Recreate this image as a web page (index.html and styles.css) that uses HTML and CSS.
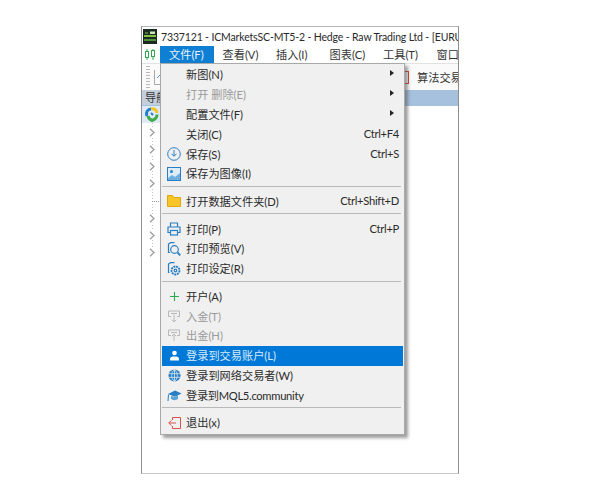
FILE: index.html
```html
<!DOCTYPE html>
<html lang="zh">
<head>
<meta charset="utf-8">
<title>MT5</title>
<link rel="stylesheet" href="styles.css">
</head>
<body>
<div class="window">
  <div class="titlebar">
    <svg class="logo" width="14" height="15" viewBox="0 0 14 15"><rect width="14" height="15" fill="#1c2b22"/><path d="M1 7h12" stroke="#7fc241" stroke-width="2"/><path d="M7 2.500h5v2.500H7z" fill="#cfe8b8"/><path d="M2 4h3" stroke="#7fc241"/><path d="M1 11h12" stroke="#4f8f3a" stroke-width="2"/></svg>
    <span class="title">7337121 - ICMarketsSC-MT5-2 - Hedge - Raw Trading Ltd - [EURUSD,H1]</span>
  </div>
  <div class="menubar">
    <svg class="app" width="12" height="13" viewBox="0 0 12 13"><path d="M3 1v11M9 1v11" stroke="#2fa84f"/><rect x="1.500" y="3.500" width="3" height="6" fill="#fff" stroke="#2fa84f"/><rect x="7.500" y="2.500" width="3" height="6" fill="#fff" stroke="#2fa84f"/></svg>
    <span class="tab active">文件(F)</span>
    <span class="tab">查看(V)</span>
    <span class="tab">插入(I)</span>
    <span class="tab">图表(C)</span>
    <span class="tab">工具(T)</span>
    <span class="tab">窗口(W)</span>
  </div>
  <div class="toolbar">
    <span class="grip"></span>
    <svg class="chart" width="9" height="16" viewBox="0 0 9 16"><path d="M.5 1v14.500H9" fill="none" stroke="#a8a8a8"/><path d="M3 9l4-4" stroke="#5a9ad0"/></svg>
    <span class="algo">
      <svg width="9" height="13" viewBox="0 0 9 13"><rect x=".5" y=".5" width="8" height="12" fill="none" stroke="#e0402f"/></svg>
      算法交易
    </span>
  </div>
  <div class="navhead"><span class="navtitle">导航</span></div>
  <div class="tree">
    <div class="root">
      <svg width="14" height="15" viewBox="0 0 14 15" fill="none" stroke-width="3"><path d="M2 9C.5 5 3 2 6 2" stroke="#1e7fd0"/><path d="M6 2c3-1 6 1 6 4" stroke="#f2c522"/><path d="M3 9c.5 3 3 4 4 4.500 3-1 5-3 5-6" stroke="#3fae4a"/><path d="M6 6l2 2" stroke="#2a7fc4" stroke-width="2"/></svg>
    </div>
    <div class="rows">
      <svg class="chev" viewBox="0 0 6 9"><path d="M1 .8l4 3.700L1 8.200" fill="none" stroke="#9a9a9a" stroke-width="1.200"/></svg>
      <svg class="chev" viewBox="0 0 6 9"><path d="M1 .8l4 3.700L1 8.200" fill="none" stroke="#9a9a9a" stroke-width="1.200"/></svg>
      <svg class="chev" viewBox="0 0 6 9"><path d="M1 .8l4 3.700L1 8.200" fill="none" stroke="#9a9a9a" stroke-width="1.200"/></svg>
      <svg class="chev" viewBox="0 0 6 9"><path d="M1 .8l4 3.700L1 8.200" fill="none" stroke="#9a9a9a" stroke-width="1.200"/></svg>
      <span class="dash"></span>
      <svg class="chev" viewBox="0 0 6 9"><path d="M1 .8l4 3.700L1 8.200" fill="none" stroke="#9a9a9a" stroke-width="1.200"/></svg>
      <svg class="chev" viewBox="0 0 6 9"><path d="M1 .8l4 3.700L1 8.200" fill="none" stroke="#9a9a9a" stroke-width="1.200"/></svg>
      <svg class="chev" viewBox="0 0 6 9"><path d="M1 .8l4 3.700L1 8.200" fill="none" stroke="#9a9a9a" stroke-width="1.200"/></svg>
    </div>
  </div>

  <div class="menu">
    <div class="item"><span class="ic"></span><span class="lb">新图(N)</span><span class="arrow"></span></div>
    <div class="item off"><span class="ic"></span><span class="lb">打开 删除(E)</span><span class="arrow"></span></div>
    <div class="item"><span class="ic"></span><span class="lb">配置文件(F)</span><span class="arrow"></span></div>
    <div class="item"><span class="ic"></span><span class="lb">关闭(C)</span><span class="sc">Ctrl+F4</span></div>
    <div class="item"><span class="ic"><svg width="14" height="14" viewBox="0 0 14 14" fill="none" stroke="#2a7fc4"><circle cx="7" cy="7" r="6.300"/><path d="M7 3v6M4.500 6.800L7 9.300l2.500-2.500"/></svg></span><span class="lb">保存(S)</span><span class="sc">Ctrl+S</span></div>
    <div class="item"><span class="ic"><svg width="14" height="14" viewBox="0 0 14 14"><rect x=".5" y=".5" width="13" height="13" fill="#dcedf9" stroke="#2a7fc4"/><circle cx="4.500" cy="4.500" r="1.500" fill="#2a7fc4"/><path d="M1 11l4-3 3 2 5-4v7H1z" fill="#6db0df"/></svg></span><span class="lb">保存为图像(I)</span></div>
    <div class="sep"></div>
    <div class="item"><span class="ic"><svg width="14" height="12" viewBox="0 0 14 12"><path d="M.5 .5h5l1.500 2h6.500v9H.5z" fill="#f7c626" stroke="#dda90f"/></svg></span><span class="lb">打开数据文件夹(D)</span><span class="sc">Ctrl+Shift+D</span></div>
    <div class="sep"></div>
    <div class="item"><span class="ic"><svg width="14" height="14" viewBox="0 0 14 14" fill="none" stroke="#2a7fc4" stroke-width="1.200"><path d="M3.500 5V1h7v4M3.500 10.500H1V5h12v5.500h-2.500"/><rect x="3.500" y="8.500" width="7" height="4.500"/></svg></span><span class="lb">打印(P)</span><span class="sc">Ctrl+P</span></div>
    <div class="item"><span class="ic"><svg width="14" height="14" viewBox="0 0 14 14" fill="none" stroke="#2a7fc4" stroke-width="1.200"><path d="M3 10.500H1.500V2l2-1.300h4"/><circle cx="7.500" cy="7.500" r="3.800"/><path d="M10.500 10.500L13.300 13.300" stroke-width="1.800"/></svg></span><span class="lb">打印预览(V)</span></div>
    <div class="item"><span class="ic"><svg width="14" height="14" viewBox="0 0 14 14" fill="none" stroke="#2a7fc4" stroke-width="1.200"><path d="M2.500 10.500H1.500V2l2-1.300h4"/><circle cx="8.500" cy="8.500" r="4" stroke-dasharray="2 .7" stroke-width="1.800"/><circle cx="8.500" cy="8.500" r="1.300"/></svg></span><span class="lb">打印设定(R)</span></div>
    <div class="sep"></div>
    <div class="item"><span class="ic"><svg width="11" height="11" viewBox="0 0 11 11"><path d="M5.500 1v9M1 5.500h9" stroke="#2fa84f" stroke-width="1.100"/></svg></span><span class="lb">开户(A)</span></div>
    <div class="item off"><span class="ic"><svg width="12" height="13" viewBox="0 0 12 13" fill="none" stroke="#b8b8b8"><path d="M3 6.500H.5V1h11v5.500H9M3 3.500h6M6 4.500V12M3.800 9.800L6 12l2.200-2.200"/></svg></span><span class="lb">入金(T)</span></div>
    <div class="item off"><span class="ic"><svg width="12" height="13" viewBox="0 0 12 13" fill="none" stroke="#b8b8b8"><path d="M3 6.500H.5V1h11v5.500H9M3 3.500h6M6 12V5M3.800 7.200L6 5l2.200 2.200"/></svg></span><span class="lb">出金(H)</span></div>
    <div class="item on"><span class="ic"><svg width="9" height="11" viewBox="0 0 10 12" fill="#fff"><circle cx="5" cy="3.200" r="2.600"/><path d="M0 11.500V9.500C0 7.500 2 7 5 7s5 .5 5 2.500v2z"/></svg></span><span class="lb">登录到交易账户(L)</span></div>
    <div class="item"><span class="ic"><svg width="13" height="13" viewBox="0 0 14 14"><circle cx="7" cy="7" r="6.500" fill="#2a7fc4"/><path d="M1 5h12M1 9h12M7 .5v13M7 .5C3 4 3 10 7 13.500M7 .5c4 3.500 4 9.500 0 13" fill="none" stroke="#e6f1fa" stroke-width=".8"/></svg></span><span class="lb">登录到网络交易者(W)</span></div>
    <div class="item"><span class="ic"><svg width="15" height="13" viewBox="0 0 15 13"><path d="M1 5l7-3.500L14.500 4.500 8 7.800z" fill="#2a7fc4"/><path d="M4 7v3c2 1.500 5 1.500 7 0V6.500L8 8z" fill="#5aa5d8"/><path d="M1.500 5.500L1 12" stroke="#2a7fc4" fill="none"/></svg></span><span class="lb tight">登录到MQL5.community</span></div>
    <div class="sep"></div>
    <div class="item"><span class="ic"><svg width="13" height="14" viewBox="0 0 13 14" fill="none" stroke="#d9534a"><path d="M4.500 4V1.500h8v11h-8V10M8 7H.8M3.500 4.300L.8 7l2.700 2.700"/></svg></span><span class="lb">退出(x)</span></div>
  </div>
</div>
</body>
</html>
```
FILE: styles.css
```css
* { box-sizing: border-box; }
html, body { margin: 0; height: 100%; background: #fff; }
body {
  padding: 26px 0 0 141px;
  font-family: Lato, "Noto Sans CJK SC", sans-serif;
  font-size: 11.200px;
  color: #333;
  overflow: hidden;
}
.window {
  position: relative;
  width: 318px;
  height: 448px;
  border: 1px solid #8e8e8e;
  border-top-color: #b5b5b5;
  border-bottom-color: #c8c8c8;
  background: #fff;
  overflow: hidden;
  display: flex;
  flex-direction: column;
}
.titlebar {
  height: 19px;
  flex: none;
  display: flex;
  align-items: center;
  gap: 4px;
  padding-left: 1px;
  white-space: nowrap;
  color: #2a2a2a;
  font-size: 10.500px;
  letter-spacing: -.15px;
}
.logo { flex: none; }
.title { flex: none; }
.menubar {
  height: 18px;
  flex: none;
  display: flex;
  align-items: stretch;
  white-space: nowrap;
  border-bottom: 1px solid #e2e2e2;
}
.app { flex: none; align-self: center; margin: 0 4px 0 2px; }
.tab { flex: none; line-height: 17px; padding-left: 9px; width: 53.500px; }
.tab.active { background: #0f7fd4; color: #e8f3fb; }
.toolbar {
  height: 26px;
  flex: none;
  display: flex;
  align-items: center;
  padding-left: 4px;
  white-space: nowrap;
  background: #fafafa;
}
.grip { width: 4px; height: 22px; flex: none; background: repeating-linear-gradient(#b8b8b8 0 1px, transparent 1px 3px); margin-right: 4px; }
.chart { flex: none; }
.algo { display: flex; align-items: center; gap: 8px; margin-left: 237px; }
.navhead {
  height: 16px;
  flex: none;
  background: #a6c1de;
  line-height: 15px;
}
.navtitle { display: block; width: 19px; padding-left: 3px; background: #c3cfdc; white-space: nowrap; overflow: hidden; }
.tree { flex: 1; }
.root { width: 19px; height: 17px; background: #dfeaf6; padding: 1px 0 0 3px; }
.root svg { display: block; }
.rows {
  display: flex;
  flex-direction: column;
  gap: 8.170px;
  margin-left: 7px;
  padding-top: 5px;
  align-items: flex-start;
  background: repeating-linear-gradient(#c4c4c4 0 1px, transparent 1px 3px) 3px 0 / 1px 100% no-repeat;
  height: 134px;
}
.chev { width: 6px; height: 9px; flex: none; background: #fff; }
.dash { width: 9px; height: 9px; flex: none; border-bottom: 1px dotted #999; margin-left: 3px; transform: translateY(-4px); }
.menu {
  position: absolute;
  left: 18px;
  top: 36px;
  width: 245px;
  background: #f0f0f0;
  border: 1px solid #a9a9a9;
  padding: 1px;
  box-shadow: 3px 3px 3px rgba(80, 80, 80, .55);
  color: #2b2b2b;
}
.item {
  height: 19.800px;
  display: flex;
  align-items: center;
  padding-right: 4px;
  white-space: nowrap;
}
.item.off { color: #9a9a9a; }
.item.on { background: #0078d7; color: #d8ebfa; }
.ic { width: 24px; flex: none; display: flex; justify-content: center; align-items: center; }
.lb { flex: 1; padding-bottom: 1px; }
.lb.tight { letter-spacing: -.3px; }
.sc { flex: none; padding-bottom: 1px; letter-spacing: -.3px; }
.arrow {
  width: 0;
  height: 0;
  margin: 0 5px 3px 0;
  border-left: 4px solid #222;
  border-top: 3.500px solid transparent;
  border-bottom: 3.500px solid transparent;
}
.sep { height: 7.800px; display: flex; align-items: flex-start; padding: 2px 2px 0 0; }
.sep::before { content: ""; flex: 1; height: 1px; background: #b9b9b9; }
```
